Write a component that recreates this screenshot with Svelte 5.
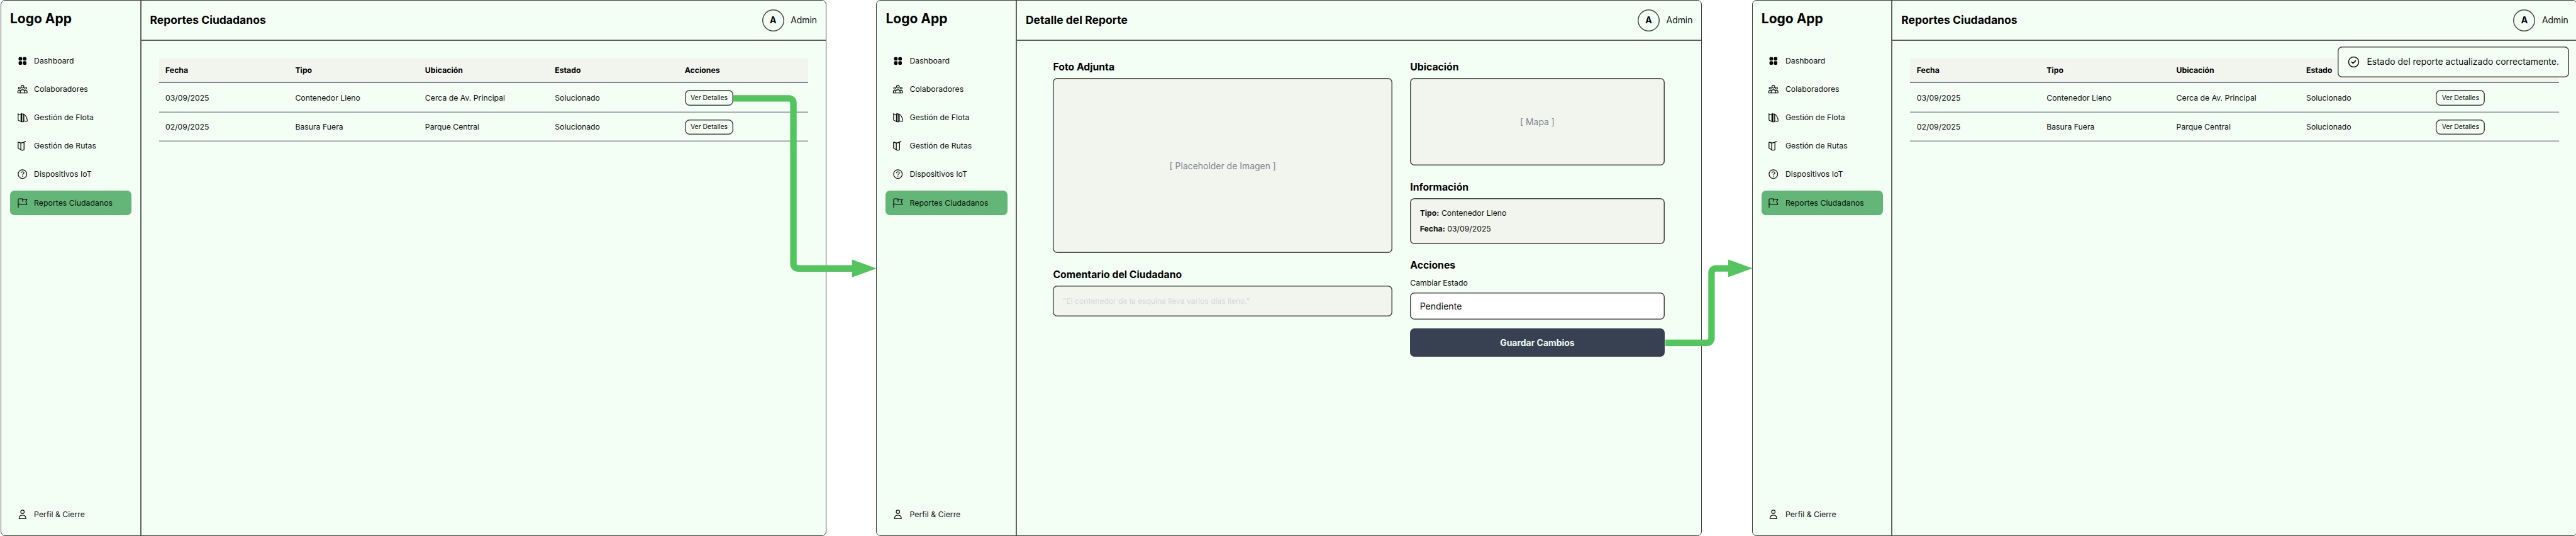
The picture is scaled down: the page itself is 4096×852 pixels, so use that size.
<script>
  const nav = [
    { icon: 'grid', label: 'Dashboard' },
    { icon: 'people', label: 'Colaboradores' },
    { icon: 'fleet', label: 'Gestión de Flota' },
    { icon: 'map', label: 'Gestión de Rutas' },
    { icon: 'help', label: 'Dispositivos IoT' },
    { icon: 'flag', label: 'Reportes Ciudadanos', active: true },
  ];
  const columns = ['Fecha', 'Tipo', 'Ubicación', 'Estado', 'Acciones'];
  const rows = [
    ['03/09/2025', 'Contenedor Lleno', 'Cerca de Av. Principal', 'Solucionado'],
    ['02/09/2025', 'Basura Fuera', 'Parque Central', 'Solucionado'],
  ];
  const screens = [
    { title: 'Reportes Ciudadanos', view: 'list' },
    { title: 'Detalle del Reporte', view: 'detail' },
    { title: 'Reportes Ciudadanos', view: 'list', toast: 'Estado del reporte actualizado correctamente.' },
  ];
</script>

{#snippet icon(name)}
  <svg class="icon" viewBox="0 0 24 24" aria-hidden="true">
    {#if name === 'grid'}
      <g class="solid">
        <rect x="3.5" y="3.6" width="7.7" height="7.6" rx="2.4" />
        <rect x="12.9" y="3.6" width="7.7" height="7.6" rx="2.4" />
        <rect x="3.5" y="12.8" width="7.7" height="7.6" rx="2.4" />
        <rect x="12.9" y="12.8" width="7.7" height="7.6" rx="2.4" />
      </g>
    {:else if name === 'people'}
      <circle cx="12" cy="6.6" r="3" />
      <circle cx="5.1" cy="9.7" r="2.2" />
      <circle cx="18.9" cy="9.7" r="2.2" />
      <path d="M1.9 20.2h20.2v-2.5c0-1.9-1.3-3.1-3.1-3.1h-1.6M1.9 20.2v-2.5c0-1.9 1.3-3.1 3.1-3.1h1.6" />
      <path d="M7.2 20.2v-2.1a4.8 4.8 0 0 1 9.6 0v2.1" />
    {:else if name === 'fleet'}
      <path d="M2.5 3.4v13.4c0 .9.4 1.4 1.2 1.7l5 2M2.5 4.6l2.7 1.6 3.4-1.4" />
      <path d="M8.7 5c0-1 .6-1.5 1.5-1.3l3.6.9c.8.2 1.2.7 1.2 1.5v13.7c0 1-.7 1.8-1.8 1.8h-2.3c-1.2 0-2.2-.8-2.2-1.8z" />
      <path d="M10.3 4.4v16.4M13.6 4.8v16.2" />
      <path d="M13.8 4.5c4.2.7 8.4 8 8.7 14.2.1 1.2-.6 1.9-1.8 1.7l-5.5-.8" />
    {:else if name === 'map'}
      <g class="heavy">
        <path d="M8.4 6.1 4.1 4.2c-1-.4-1.6 0-1.6 1v11c0 1 .4 1.6 1.3 2l4.6 2" />
        <path d="M8.4 6.1v13.8c0 1 1.3 1.9 2.7 1.8l2.4-.2c1.2-.1 1.9-.8 1.9-1.9V5.2" />
        <path d="m8.4 6.1 5.8-1.6c1.9-.5 2.6-1.4 4.5-1.9" />
      </g>
    {:else if name === 'help'}
      <circle cx="12" cy="12" r="9.4" />
      <path d="M8.9 9.3c.3-1.6 1.5-2.5 3.1-2.5 1.8 0 3.2 1.1 3.2 2.7 0 2.4-3.1 2.2-3.1 4.6" />
      <path d="M12.1 16.9v.1" />
    {:else if name === 'flag'}
      <path d="M2.7 21.6V4.3c0-1 .6-1.6 1.6-1.6h8v5.8" />
      <path d="M12.3 3.6h9.5l-2.5 5.2 2.5 6.3H9.4c-1.1 0-1.1-.9-2.2-.9H2.7" />
    {:else if name === 'user'}
      <circle cx="12" cy="6.3" r="3.8" />
      <path d="M4.6 21.2c0-4.5 2.8-7.7 7.4-7.7s7.4 3.2 7.4 7.7z" />
    {:else if name === 'check'}
      <circle cx="12" cy="12" r="9.2" />
      <path class="tick" d="m8.3 12 2.6 2.3 4.5-4.5" />
    {/if}
  </svg>
{/snippet}

<main class="board">
  {#each screens as screen}
    <section class="screen">
      <aside class="sidebar">
        <div class="logo">Logo App</div>
        <nav>
          {#each nav as item}
            <a class="item" class:active={item.active}>{@render icon(item.icon)}<span>{item.label}</span></a>
          {/each}
        </nav>
        <a class="item profile">{@render icon('user')}<span>Perfil &amp; Cierre</span></a>
      </aside>

      <div class="page">
        <header>
          <h1>{screen.title}</h1>
          <div class="account"><b class="avatar">A</b><span>Admin</span></div>
        </header>

        {#if screen.view === 'list'}
          <div class="list">
            <div class="row head">
              {#each columns as column}<span>{column}</span>{/each}
            </div>
            {#each rows as row}
              <div class="row">
                {#each row as cell}<span class="cell">{cell}</span>{/each}
                <span><button class="small">Ver Detalles</button></span>
              </div>
            {/each}
          </div>
        {:else}
          <div class="detail">
            <div class="col">
              <section>
                <h2>Foto Adjunta</h2>
                <div class="box photo">[ Placeholder de Imagen ]</div>
              </section>
              <section>
                <h2>Comentario del Ciudadano</h2>
                <div class="box quote">"El contenedor de la esquina lleva varios días lleno."</div>
              </section>
            </div>
            <div class="col">
              <section>
                <h2>Ubicación</h2>
                <div class="box map">[ Mapa ]</div>
              </section>
              <section>
                <h2>Información</h2>
                <div class="box info">
                  <p><b>Tipo:</b> Contenedor Lleno</p>
                  <p><b>Fecha:</b> 03/09/2025</p>
                </div>
              </section>
              <section>
                <h2>Acciones</h2>
                <div class="label">Cambiar Estado</div>
                <div class="box field">Pendiente</div>
                <button class="save">Guardar Cambios</button>
              </section>
            </div>
          </div>
        {/if}
      </div>

      {#if screen.toast}
        <div class="toast">{@render icon('check')}<span>{screen.toast}</span></div>
      {/if}
    </section>
  {/each}

  <svg class="flow" viewBox="0 0 5850 1217" preserveAspectRatio="none" aria-hidden="true">
    <path d="M1665.5 223.3H1791.8a10 10 0 0 1 10 10V599.5a10 10 0 0 0 10 10H1936" />
    <polygon points="1935,589.3 1990.5,609.4 1935,629.5" />
    <path d="M3782 778.3H3876.8a10 10 0 0 0 10-10V619.3a10 10 0 0 1 10-10H3926" />
    <polygon points="3924.6,589.3 3980,609.3 3924.6,629.3" />
  </svg>
</main>

<style>
  :global(body) {
    background: #fff;
    overflow: hidden;
  }
  * {
    box-sizing: border-box;
    margin: 0;
  }
  .board {
    --ink: #484848;
    --mint: #f3fff5;
    --sand: #f2f4ee;
    --line: 1.5px;
    position: relative;
    display: flex;
    gap: 79.8px;
    width: 4096px;
    height: 852px;
    padding-left: 1px;
    overflow: hidden;
    font: 12.25px/20.8px Inter, sans-serif;
    color: #0c0c0c;
  }
  .screen {
    position: relative;
    display: flex;
    flex: none;
    width: 1312.6px;
    height: 851.6px;
    border: 1px solid #403e3e;
    border-radius: 7px;
    background: var(--mint);
  }
  .sidebar {
    display: flex;
    flex-direction: column;
    flex: none;
    width: 222.5px;
    padding: 14px 13.4px 13.6px 14px;
    border-right: 2px solid #626262;
  }
  .logo {
    height: 29px;
    margin-bottom: 33.4px;
    padding-top: 0.5px;
    font-size: 21px;
    font-weight: 700;
    line-height: 28.4px;
    color: #000;
  }
  nav {
    display: flex;
    flex-direction: column;
    gap: 7px;
  }
  .item {
    display: flex;
    align-items: center;
    gap: 10.1px;
    height: 38.2px;
    padding: 0 10.5px;
    border-radius: 7px;
    letter-spacing: 0.03px;
    white-space: nowrap;
  }
  .item span {
    padding-top: 1.2px;
  }
  .active {
    background: #63b678;
  }
  .profile {
    margin-top: auto;
  }
  .icon {
    flex: none;
    width: 17.5px;
    height: 17.5px;
    fill: none;
    stroke: #050505;
    stroke-width: 1.6;
    stroke-linecap: round;
    stroke-linejoin: round;
  }
  .solid {
    fill: #000;
    stroke: none;
  }
  .heavy {
    stroke-width: 1.8;
  }
  .page {
    flex: 1;
    min-width: 0;
  }
  header {
    display: flex;
    align-items: center;
    justify-content: space-between;
    height: 64px;
    padding: 0 13.6px 0 14px;
    border-bottom: 2px solid #5c5c5c;
  }
  h1 {
    font-size: 17.55px;
    font-weight: 700;
    color: #000;
  }
  .account {
    display: flex;
    align-items: center;
    gap: 10.5px;
    font-size: 13.9px;
  }
  .avatar {
    display: grid;
    place-items: center;
    width: 35px;
    height: 35px;
    border-radius: 50%;
    box-shadow: inset 0 0 0 var(--line) var(--ink);
    font-size: 14px;
    color: #000;
  }
  .list {
    margin: 28.1px 28px 0;
  }
  .row {
    display: grid;
    grid-template-columns: repeat(5, 1fr);
    align-items: center;
    height: 46.3px;
    box-shadow: inset 0 -1.5px #8a969c;
  }
  .row > span {
    padding: 0 10.5px;
    white-space: nowrap;
  }
  .row > .cell {
    padding-top: 0.9px;
  }
  .head {
    height: 39.3px;
    padding-bottom: 0.6px;
    background: var(--sand);
    box-shadow: inset 0 -1.7px #747b8b;
    font-weight: 700;
    color: #000;
  }
  button {
    border: 0;
    font-family: inherit;
  }
  .small {
    display: block;
    width: 77.7px;
    height: 24.4px;
    padding: 0;
    border-radius: 7.5px;
    background: var(--mint);
    box-shadow: inset 0 0 0 var(--line) var(--ink);
    font-size: 10.45px;
    color: #0c0c0c;
  }
  .detail {
    display: grid;
    grid-template-columns: 539.6px 404.4px;
    justify-content: center;
    gap: 28.2px;
    padding: 28px 0.8px 0 0;
  }
  .col {
    display: flex;
    flex-direction: column;
    gap: 20.6px;
  }
  h2 {
    height: 27px;
    margin-bottom: 4.4px;
    font-size: 15.75px;
    font-weight: 700;
    line-height: 27px;
    color: #000;
  }
  .box {
    border-radius: 7px;
    background: var(--sand);
    box-shadow: inset 0 0 0 var(--line) var(--ink);
  }
  .photo,
  .map {
    display: grid;
    place-items: center;
    padding-top: 1.2px;
    font-size: 13.95px;
    color: #7f8591;
  }
  .photo {
    height: 278px;
  }
  .map {
    height: 138.8px;
  }
  .quote {
    height: 48.6px;
    padding: 0 15.4px;
    font-size: 12.1px;
    line-height: 49.6px;
    color: #d5d8dd;
  }
  .info {
    display: flex;
    flex-direction: column;
    justify-content: center;
    gap: 3.7px;
    height: 72.6px;
    padding: 1.2px 15.4px 0;
  }
  .label {
    margin: 0.2px 0 4.3px;
  }
  .field {
    height: 43.1px;
    padding: 0 15.4px;
    background: #fff;
    font-size: 14.1px;
    line-height: 43.8px;
  }
  .save {
    display: block;
    width: 100%;
    height: 44.8px;
    margin-top: 14.4px;
    border-radius: 7px;
    background: #384152;
    font-size: 13.95px;
    font-weight: 700;
    color: #effcf3;
  }
  .toast {
    position: absolute;
    top: 73px;
    right: 12.4px;
    display: flex;
    align-items: center;
    gap: 10.2px;
    width: 368.2px;
    height: 48.5px;
    padding: 0 15.4px;
    border-radius: 7px;
    background: var(--mint);
    box-shadow: inset 0 0 0 var(--line) var(--ink);
    font-size: 13.98px;
    white-space: nowrap;
  }
  .toast .icon {
    width: 21px;
    height: 21px;
  }
  .tick {
    stroke-width: 1.9;
  }
  .flow {
    position: absolute;
    inset: 0;
    width: 4096px;
    height: 852px;
    fill: #54c55e;
  }
  .flow path {
    fill: none;
    stroke: #54c55e;
    stroke-width: 14.8;
  }
</style>
